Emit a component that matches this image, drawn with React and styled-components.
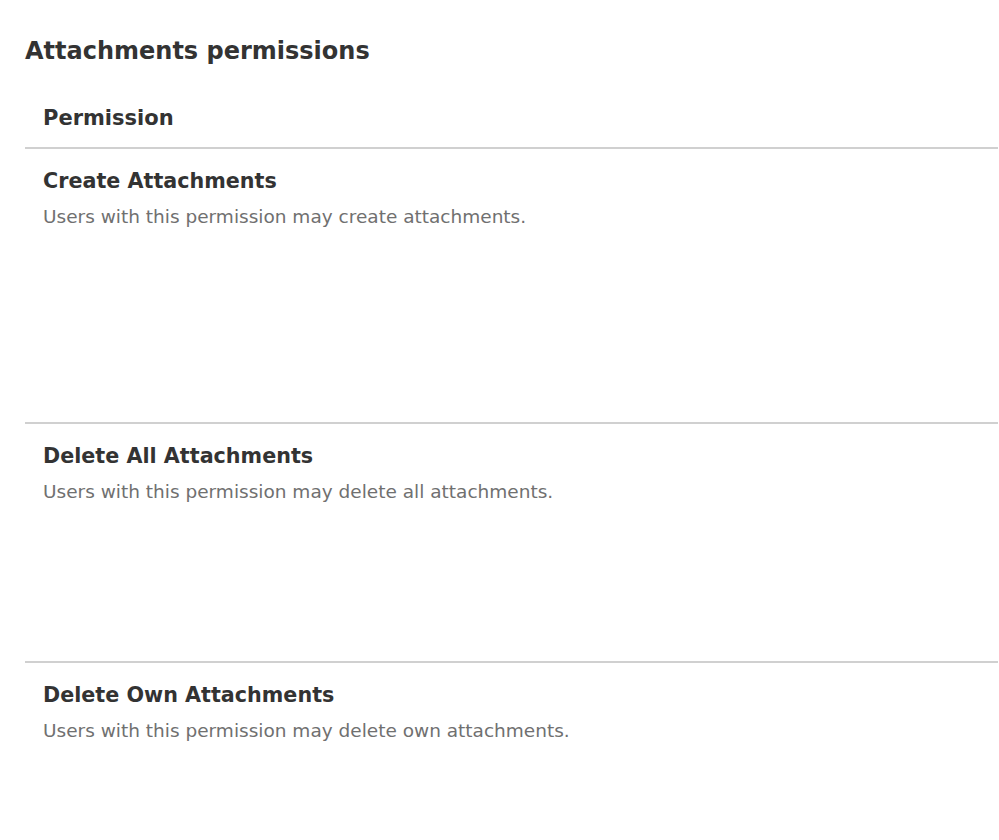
import React from "react";
import styled, { createGlobalStyle } from "styled-components";

const Global = createGlobalStyle`
  html, body { margin: 0; padding: 0; background: #fff; }
  body { font-family: "DejaVu Sans", "Liberation Sans", Arial, sans-serif; color: #333; }
`;

const Page = styled.div`
  padding: 36px 1px 0 25px;
  min-height: 840px;
  box-sizing: border-box;
`;

const Title = styled.h2`
  margin: 0;
  font-size: 24px;
  line-height: 30px;
  font-weight: bold;
  color: #333;
`;

const Table = styled.div`
  display: flex;
  flex-direction: column;
`;

const HeadRow = styled.div`
  padding: 39px 18px 16px;
  font-size: 21px;
  line-height: 26px;
  font-weight: bold;
  color: #333;
`;

const Row = styled.div`
  box-sizing: border-box;
  border-top: 2px solid #d0d0d0;
  height: ${(p) => (p.$h ? `${p.$h}px` : "auto")};
  padding: 19px 18px 0;
`;

const Name = styled.div`
  font-size: 20.7px;
  line-height: 26px;
  font-weight: bold;
  color: #333;
`;

const Desc = styled.div`
  margin-top: 11px;
  font-size: 18.5px;
  line-height: 24px;
  color: #707070;
`;

const perms = [
  { name: "Create Attachments", desc: "Users with this permission may create attachments.", h: 275 },
  { name: "Delete All Attachments", desc: "Users with this permission may delete all attachments.", h: 239 },
  { name: "Delete Own Attachments", desc: "Users with this permission may delete own attachments.", h: 180 },
];

export default function App() {
  return (
    <>
      <Global />
      <Page>
        <Title>Attachments permissions</Title>
        <Table>
          <HeadRow>Permission</HeadRow>
          {perms.map((p) => (
            <Row key={p.name} $h={p.h}>
              <Name>{p.name}</Name>
              <Desc>{p.desc}</Desc>
            </Row>
          ))}
        </Table>
      </Page>
    </>
  );
}
